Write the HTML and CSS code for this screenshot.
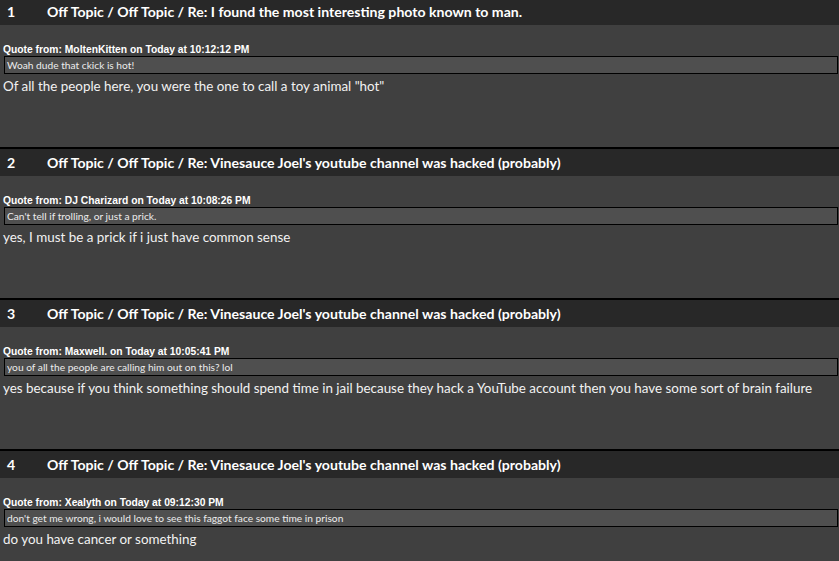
FILE: index.html
```html
<!DOCTYPE html>
<html lang="en">
<head>
    <meta charset="UTF-8">
    <title>Recent posts</title>
    <link rel="stylesheet" href="styles.css">
</head>
<body>
    <div class="post">
        <div class="post-head">
            <span class="num">1</span>
            <span class="title">Off Topic / Off Topic / Re: I found the most interesting photo known to man.</span>
        </div>
        <div class="post-body">
            <div class="quote-head">Quote from: MoltenKitten on Today at 10:12:12 PM</div>
            <div class="quote">Woah dude that ckick is hot!</div>
            <div class="msg">Of all the people here, you were the one to call a toy animal "hot"</div>
        </div>
    </div>

    <div class="post">
        <div class="post-head">
            <span class="num">2</span>
            <span class="title">Off Topic / Off Topic / Re: Vinesauce Joel's youtube channel was hacked (probably)</span>
        </div>
        <div class="post-body">
            <div class="quote-head">Quote from: DJ Charizard on Today at 10:08:26 PM</div>
            <div class="quote">Can't tell if trolling, or just a prick.</div>
            <div class="msg">yes, I must be a prick if i just have common sense</div>
        </div>
    </div>

    <div class="post">
        <div class="post-head">
            <span class="num">3</span>
            <span class="title">Off Topic / Off Topic / Re: Vinesauce Joel's youtube channel was hacked (probably)</span>
        </div>
        <div class="post-body">
            <div class="quote-head">Quote from: Maxwell. on Today at 10:05:41 PM</div>
            <div class="quote">you of all the people are calling him out on this? lol</div>
            <div class="msg">yes because if you think something should spend time in jail because they hack a YouTube account then you have some sort of brain failure</div>
        </div>
    </div>

    <div class="post">
        <div class="post-head">
            <span class="num">4</span>
            <span class="title">Off Topic / Off Topic / Re: Vinesauce Joel's youtube channel was hacked (probably)</span>
        </div>
        <div class="post-body">
            <div class="quote-head">Quote from: Xealyth on Today at 09:12:30 PM</div>
            <div class="quote">don't get me wrong, i would love to see this faggot face some time in prison</div>
            <div class="msg">do you have cancer or something</div>
        </div>
    </div>
</body>
</html>
```

FILE: styles.css
```css
body {
    margin: -2px 0 0 0;
    background-color: #404040;
    font-family: Lato, "Open Sans", sans-serif;
    color: #f2f2f2;
}
.post {
    border-bottom: 2px solid #000;
}
.post-head {
    display: flex;
    align-items: center;
    height: 27px;
    padding-left: 7px;
    background-color: #282828;
    color: #fff;
    font-weight: bold;
    font-size: 14.1px;
}
.num {
    width: 40px;
}
.post-body {
    height: 122px;
    padding-top: 18px;
    box-sizing: border-box;
}
.quote-head {
    margin-left: 3px;
    font-family: "Liberation Sans", Arial, sans-serif;
    font-weight: bold;
    font-size: 10.3px;
    line-height: 13px;
    color: #fff;
}
.quote {
    margin: 0 1px 0 4px;
    height: 16px;
    padding-left: 2px;
    border: 1px solid #000;
    background-color: #4f4f4f;
    font-size: 10.2px;
    line-height: 16px;
    color: #ececec;
}
.msg {
    margin: 3px 0 0 3px;
    font-size: 13.4px;
    line-height: 18px;
}
```
